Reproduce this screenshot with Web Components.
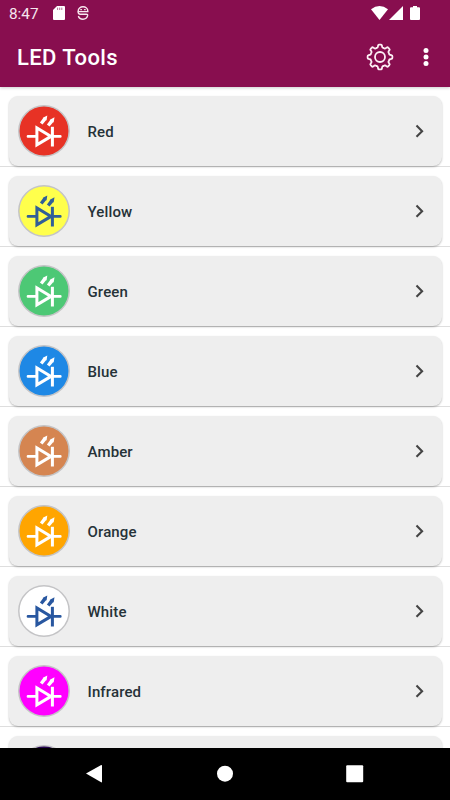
<!DOCTYPE html>
<html lang="en">
<head>
<meta charset="utf-8">
<title>LED Tools</title>
<style>
  body {
    margin: 0;
    font-family: Roboto, sans-serif;
    background: #fff;
  }
</style>
</head>
<body>
<led-app>
  <status-bar slot="top" time="8:47"></status-bar>
  <app-toolbar slot="top">LED Tools</app-toolbar>
  <led-row color="#e73225">Red</led-row>
  <led-row color="#ffff4c" ink="#315f98">Yellow</led-row>
  <led-row color="#4dc875">Green</led-row>
  <led-row color="#1e88e5">Blue</led-row>
  <led-row color="#d58551">Amber</led-row>
  <led-row color="#ffa500">Orange</led-row>
  <led-row color="#ffffff" ink="#2857a0">White</led-row>
  <led-row color="#ff00ff">Infrared</led-row>
  <led-row color="#25054f"></led-row>
  <nav-bar slot="bottom"></nav-bar>
</led-app>

<script>
class LedApp extends HTMLElement {
  constructor() {
    super();
    this.attachShadow({ mode: 'open' });
  }

  connectedCallback() {
    this.shadowRoot.innerHTML = `
      <style>
        :host {
          display: flex;
          flex-direction: column;
          width: 450px;
          height: 800px;
          overflow: hidden;
        }

        header {
          flex: none;
          background: #880e4f;
          box-shadow: 0 1px 3px #0003;
        }

        main {
          flex: 1;
          min-height: 0;
          overflow: hidden;
        }
      </style>

      <header><slot name="top"></slot></header>
      <main><slot></slot></main>
      <slot name="bottom"></slot>
    `;
  }
}

class StatusBar extends HTMLElement {
  constructor() {
    super();
    this.attachShadow({ mode: 'open' });
  }

  connectedCallback() {
    this.shadowRoot.innerHTML = `
      <style>
        :host {
          display: flex;
          align-items: center;
          height: 27px;
          padding: 0 30px 1px 9px;
          box-sizing: border-box;
          color: #fff;
        }

        span {
          font-size: 15.3px;
          line-height: 26px;
          width: 44px;
          padding-top: 1px;
          color: #f6e6ee;
        }

        svg { display: block; fill: #fff; }
        .debug { margin-left: 12px; }
        .wifi { margin-left: auto; }
        .signal { margin-left: 1px; }
        .battery { margin-left: 7px; }
      </style>

      <span>${this.getAttribute('time')}</span>
      <svg width="12" height="14" viewBox="0 0 12 14">
        <path d="M4 0H11Q12 0 12 1V13Q12 14 11 14H1Q0 14 0 13V4Z"/>
        <path d="M4.6 1.6v2.4M6.7 1.6v2.4M8.8 1.6v2.4" stroke="#880e4f" stroke-width=".6"/>
      </svg>
      <svg class="debug" width="12" height="14" viewBox="0 0 12 14">
        <g fill="none" stroke="#f8e8ef" stroke-width="1.4">
          <path d="M1.2 5.600V5a4.800 4.200 0 0 1 9.600 0v.600Z"/>
          <path d="M1.200 5.500Q1 8.200 3.300 8.200H9.300Q10.900 8.200 10.600 9.700Q9.800 13.200 6 13.200Q2.200 13.200 1.400 10"/>
        </g>
        <path d="M3.300 3.600h1.600M7.100 3.600h1.600" stroke="#f8e8ef" stroke-width="1.200"/>
      </svg>
      <svg class="wifi" width="17" height="14" viewBox="0 0 17 14">
        <path d="M0 3.300Q8.500-3.200 17 3.300L8.500 14Z"/>
      </svg>
      <svg class="signal" width="14" height="14" viewBox="0 0 14 14">
        <path d="M14 0V14H0Z"/>
      </svg>
      <svg class="battery" width="10" height="14" viewBox="0 0 10 14">
        <path d="M3 0H7V1.200H9Q10 1.200 10 2.200V13Q10 14 9 14H1Q0 14 0 13V2.200Q0 1.200 1 1.200H3Z"/>
      </svg>
    `;
  }
}

class AppToolbar extends HTMLElement {
  constructor() {
    super();
    this.attachShadow({ mode: 'open' });
  }

  // eight rounded teeth around the centre
  gearPath() {
    const at = (r, deg) => {
      const a = deg * Math.PI / 180;
      return `${(14 + r * Math.sin(a)).toFixed(2)} ${(14 - r * Math.cos(a)).toFixed(2)}`;
    };
    let d = '';
    for (let i = 0; i < 8; i++) {
      const a = i * 45;
      d += `${i ? 'L' : 'M'}${at(11.4, a - 10)}Q${at(12.6, a - 8)} ${at(12.4, a - 4)}`;
      d += `L${at(12.4, a + 4)}Q${at(12.6, a + 8)} ${at(11.4, a + 10)}`;
      d += `Q${at(9, a + 13)} ${at(9.8, a + 22.5)}Q${at(9, a + 32)} ${at(11.4, a + 35)}`;
    }
    return d + 'Z';
  }

  connectedCallback() {
    this.shadowRoot.innerHTML = `
      <style>
        :host {
          display: flex;
          align-items: center;
          height: 60px;
          padding: 0 21px 0 17px;
          box-sizing: border-box;
          color: #fff;
        }

        h1 {
          flex: 1;
          margin: 0;
          font-size: 22px;
          font-weight: 500;
          line-height: 60px;
          letter-spacing: 0.4px;
          padding-top: 1px;
        }

        svg { display: block; }
        .more { margin-left: 29px; }
      </style>

      <h1><slot></slot></h1>
      <svg width="28" height="28" viewBox="0 0 28 28" fill="none" stroke="#fdf0f5" stroke-width="1.800" stroke-linejoin="round">
        <path d="${this.gearPath()}"/>
        <circle cx="14" cy="14" r="5"/>
      </svg>
      <svg class="more" width="6" height="20" viewBox="0 0 6 20" fill="#fff">
        <circle cx="3" cy="3.500" r="2.500"/>
        <circle cx="3" cy="10" r="2.500"/>
        <circle cx="3" cy="16.500" r="2.500"/>
      </svg>
    `;
  }
}

class LedRow extends HTMLElement {
  constructor() {
    super();
    this.attachShadow({ mode: 'open' });
  }

  connectedCallback() {
    const color = this.getAttribute('color');
    const ink = this.getAttribute('ink') || '#fff';

    this.shadowRoot.innerHTML = `
      <style>
        :host {
          display: block;
          height: 80px;
          padding: 9px 8.5px 0;
          box-sizing: border-box;
          border-bottom: 1px solid #dedede;
        }

        article {
          display: flex;
          align-items: center;
          height: 70px;
          padding: 0 17px 0 9.5px;
          box-sizing: border-box;
          border-radius: 9px;
          background: #eee;
          box-shadow: 0 1px 2px #0004;
        }

        .label {
          flex: 1;
          margin-left: 17.5px;
          padding-top: 2px;
          font-size: 15px;
          font-weight: 500;
          letter-spacing: 0.13px;
          color: #263238;
        }

        svg { display: block; }
      </style>

      <article>
        <svg width="52" height="52" viewBox="0 0 52 52">
          <circle cx="26" cy="26" r="25.200" fill="${color}" stroke="#c4c4c6" stroke-width="1.500"/>
          <g fill="none" stroke="${ink}" stroke-width="3">
            <path d="M10 31.400H18M34 31.400H42.300" stroke-linecap="round" stroke-width="2.700"/>
            <path d="M18.900 23V39.800L33 31.400Z"/>
            <path d="M34.400 21.800V41.500"/>
          </g>
          <g fill="${ink}">
            <path d="M21.900 17.500L24.900 13.500L24.900 12.800L29.300 10.400L28.600 15.300L27.800 15.600L24.500 19.500Z"/>
            <path d="M28.900 19.500L31.900 15.500L31.900 14.800L36.500 12.300L35.700 17.300L34.900 17.600L31.500 21.600Z"/>
          </g>
        </svg>
        <div class="label"><slot></slot></div>
        <svg width="10" height="14" viewBox="0 0 10 14" fill="none" stroke="#444" stroke-width="2.100">
          <path d="M1.500 1.600L7.100 7.200L1.500 12.800"/>
        </svg>
      </article>
    `;
  }
}

class NavBar extends HTMLElement {
  constructor() {
    super();
    this.attachShadow({ mode: 'open' });
  }

  connectedCallback() {
    this.shadowRoot.innerHTML = `
      <style>
        :host {
          display: grid;
          grid-template-columns: repeat(3, 130px);
          justify-content: center;
          justify-items: center;
          align-items: center;
          flex: none;
          height: 52px;
          background: #000;
        }

        svg { display: block; fill: #fff; }
      </style>

      <svg width="18" height="18" viewBox="0 0 18 18"><path d="M0 8.600L15.200 .100Q16 0 16 .600V16.800Q16 17.600 15.200 17.300Z"/></svg>
      <svg width="18" height="18" viewBox="0 0 18 18"><circle cx="9" cy="8.700" r="8"/></svg>
      <svg width="18" height="18" viewBox="0 0 18 18"><rect x=".200" y=".200" width="17" height="17" rx="1"/></svg>
    `;
  }
}

customElements.define('led-app', LedApp);
customElements.define('status-bar', StatusBar);
customElements.define('app-toolbar', AppToolbar);
customElements.define('led-row', LedRow);
customElements.define('nav-bar', NavBar);
</script>
</body>
</html>
